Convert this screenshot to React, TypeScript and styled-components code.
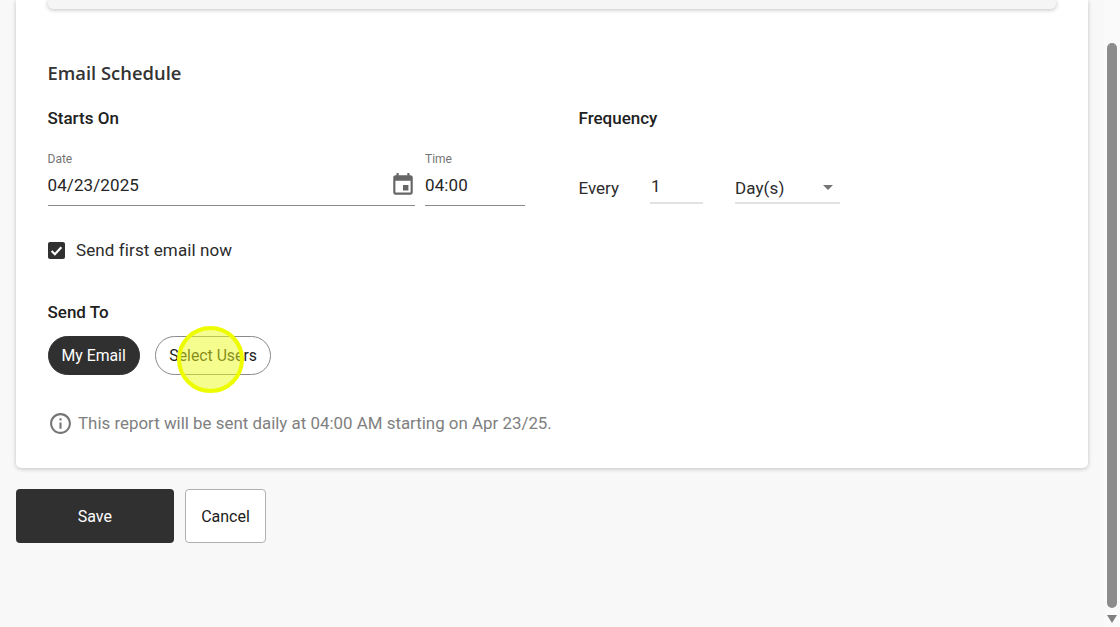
import React from "react";
import styled, { createGlobalStyle } from "styled-components";

const GlobalStyle = createGlobalStyle`
  html, body {
    margin: 0;
    padding: 0;
    height: 100%;
    overflow: hidden;
    background: #f8f8f8;
    font-family: Roboto, "Liberation Sans", sans-serif;
    color: #212121;
  }
`;

const Screen = styled.div`
  position: relative;
  display: flex;
  height: 627px;
  overflow: hidden;
`;

const Main = styled.main`
  flex: 1;
  padding: 0 16px 0 15.5px;
`;

const Card = styled.section`
  height: 468px;
  box-sizing: border-box;
  padding: 0 32px;
  background: #fff;
  border-radius: 0 0 5px 5px;
  box-shadow: 0 1px 4px rgba(0, 0, 0, 0.22);
`;

const TopPanel = styled.div`
  height: 9px;
  margin-bottom: 51px;
  background: #f5f5f5;
  border-radius: 0 0 5px 5px;
  box-shadow: 0 1px 4px rgba(0, 0, 0, 0.25);
`;

const Title = styled.h2`
  margin: 0 0 21px;
  height: 26px;
  font: 600 18.4px/26px "Open Sans", sans-serif;
  color: #333;
`;

const Columns = styled.div`
  display: grid;
  grid-template-columns: 531px 1fr;
`;

const SectionLabel = styled.h3`
  margin: 0;
  font: 500 17px/22px Roboto, sans-serif;
  color: #212121;
`;

const DateRow = styled.div`
  display: flex;
  gap: 10.5px;
  margin-top: 22px;
`;

const Field = styled.div<{ $width: number }>`
  width: ${(p) => p.$width}px;
`;

const FieldLabel = styled.div`
  font-size: 12px;
  line-height: 16px;
  color: #757575;
`;

const FieldValue = styled.div`
  display: flex;
  align-items: center;
  justify-content: space-between;
  height: 30px;
  margin-top: 3px;
  padding-bottom: 5px;
  border-bottom: 1px solid #8a8a8a;
  font-size: 17px;
  letter-spacing: 0.1px;
  color: #262626;
`;

const CalendarIcon = styled.svg`
  width: 26px;
  height: 26px;
  margin-right: -1px;
  fill: #666;
`;

const FrequencyRow = styled.div`
  display: flex;
  align-items: flex-end;
  margin-top: 43px;
  font-size: 17px;
  color: #2b2b2b;
`;

const EveryLabel = styled.span`
  width: 71.5px;
  line-height: 32px;
`;

const NumberInput = styled.div`
  width: 53px;
  height: 31px;
  box-sizing: border-box;
  border-bottom: 2px solid #e2e2e2;
  padding-left: 1px;
  line-height: 26px;
  letter-spacing: 0.1px;
`;

const SelectInput = styled.div`
  display: flex;
  align-items: center;
  justify-content: space-between;
  width: 105px;
  height: 31px;
  box-sizing: border-box;
  margin-left: 32px;
  border-bottom: 2px solid #e2e2e2;
  letter-spacing: 0.1px;
`;

const Caret = styled.span`
  width: 0;
  height: 0;
  margin-right: 7px;
  border-left: 5.5px solid transparent;
  border-right: 5.5px solid transparent;
  border-top: 5.5px solid #757575;
`;

const CheckRow = styled.label`
  display: flex;
  align-items: center;
  gap: 11.5px;
  margin-top: 33px;
  height: 22px;
  font-size: 17px;
  letter-spacing: 0.1px;
  color: #2b2b2b;
`;

const CheckBox = styled.span`
  display: flex;
  align-items: center;
  justify-content: center;
  width: 17px;
  height: 17px;
  border-radius: 2px;
  background: #303030;
`;

const SendTo = styled.div`
  margin-top: 40px;
`;

const PillRow = styled.div`
  display: flex;
  gap: 15.5px;
  margin-top: 13px;
`;

const Pill = styled.button<{ $active?: boolean }>`
  height: 39px;
  box-sizing: border-box;
  padding: 0 13px;
  border-radius: 20px;
  border: 1px solid ${(p) => (p.$active ? "#303030" : "#8a8a8a")};
  background: ${(p) => (p.$active ? "#303030" : "#fff")};
  color: ${(p) => (p.$active ? "#fff" : "#1c1c1c")};
  font: 400 15.8px Roboto, sans-serif;
`;

const InfoRow = styled.div`
  display: flex;
  align-items: center;
  gap: 5.5px;
  margin-top: 36px;
  height: 24px;
  font-size: 16.9px;
  color: #808080;
`;

const Actions = styled.div`
  display: flex;
  gap: 11px;
  margin-top: 21px;
`;

const SaveButton = styled.button`
  width: 158.5px;
  height: 54px;
  border: none;
  border-radius: 4px;
  background: #303030;
  color: #fff;
  font: 400 16px Roboto, sans-serif;
`;

const CancelButton = styled.button`
  width: 81px;
  height: 54px;
  border: 1px solid #b0b0b0;
  border-radius: 4px;
  background: #fff;
  color: #1c1c1c;
  font: 400 16px Roboto, sans-serif;
`;

const Scrollbar = styled.div`
  display: flex;
  flex-direction: column;
  align-items: center;
  width: 16px;
  padding-top: 43px;
  box-sizing: border-box;
  background: #fafafa;
`;

const ScrollThumb = styled.div`
  width: 10px;
  height: 565px;
  border-radius: 5px;
  background: #8c8c8c;
`;

const ScrollArrow = styled.div`
  width: 0;
  height: 0;
  margin-top: 7px;
  border-left: 5px solid transparent;
  border-right: 5px solid transparent;
  border-top: 8px solid #808080;
`;

const ClickHighlight = styled.div`
  position: absolute;
  left: 177px;
  top: 326px;
  width: 67px;
  height: 67px;
  box-sizing: border-box;
  border: 4px solid #eefc00;
  border-radius: 50%;
  background: rgba(235, 252, 30, 0.5);
  pointer-events: none;
`;

const App = () => {
  return (
    <>
      <GlobalStyle />
      <Screen>
        <Main>
          <Card>
            <TopPanel />
            <Title>Email Schedule</Title>
            <Columns>
              <div>
                <SectionLabel>Starts On</SectionLabel>
                <DateRow>
                  <Field $width={367}>
                    <FieldLabel>Date</FieldLabel>
                    <FieldValue>
                      04/23/2025
                      <CalendarIcon viewBox="0 0 24 24">
                        <path d="M17 12h-5v5h5v-5zM16 1v2H8V1H6v2H5c-1.11 0-1.99.9-1.99 2L3 19c0 1.1.89 2 2 2h14c1.1 0 2-.9 2-2V5c0-1.1-.9-2-2-2h-1V1h-2zm3 18H5V8h14v11z" />
                      </CalendarIcon>
                    </FieldValue>
                  </Field>
                  <Field $width={100}>
                    <FieldLabel>Time</FieldLabel>
                    <FieldValue>04:00</FieldValue>
                  </Field>
                </DateRow>
              </div>
              <div>
                <SectionLabel>Frequency</SectionLabel>
                <FrequencyRow>
                  <EveryLabel>Every</EveryLabel>
                  <NumberInput>1</NumberInput>
                  <SelectInput>
                    Day(s)
                    <Caret />
                  </SelectInput>
                </FrequencyRow>
              </div>
            </Columns>
            <CheckRow>
              <CheckBox>
                <svg width="13" height="13" viewBox="0 0 24 24" fill="none" stroke="#fff" strokeWidth="4">
                  <path d="M3 13l6 6L21 6" />
                </svg>
              </CheckBox>
              Send first email now
            </CheckRow>
            <SendTo>
              <SectionLabel>Send To</SectionLabel>
              <PillRow>
                <Pill $active>My Email</Pill>
                <Pill>Select Users</Pill>
              </PillRow>
            </SendTo>
            <InfoRow>
              <svg width="25" height="25" viewBox="0 0 24 24" fill="#757575">
                <path d="M11 7h2v2h-2zm0 4h2v6h-2zm1-9C6.48 2 2 6.48 2 12s4.48 10 10 10 10-4.48 10-10S17.52 2 12 2zm0 18c-4.41 0-8-3.59-8-8s3.59-8 8-8 8 3.59 8 8-3.59 8-8 8z" />
              </svg>
              This report will be sent daily at 04:00 AM starting on Apr 23/25.
            </InfoRow>
          </Card>
          <Actions>
            <SaveButton>Save</SaveButton>
            <CancelButton>Cancel</CancelButton>
          </Actions>
        </Main>
        <Scrollbar>
          <ScrollThumb />
          <ScrollArrow />
        </Scrollbar>
        <ClickHighlight />
      </Screen>
    </>
  );
};

export default App;
